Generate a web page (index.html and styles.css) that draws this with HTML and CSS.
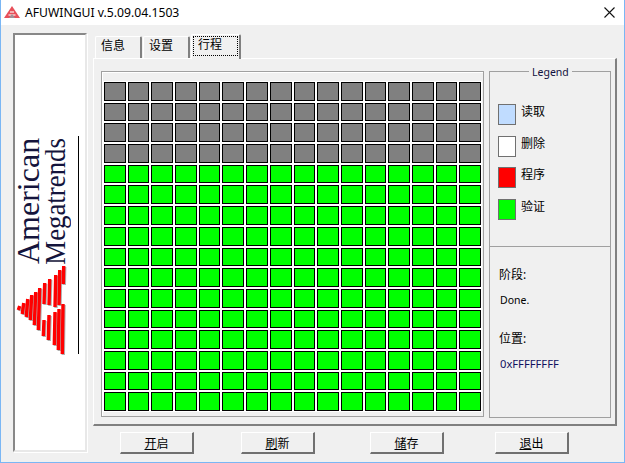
FILE: index.html
```html
<!DOCTYPE html>
<html lang="zh">
<head>
    <meta charset="UTF-8">
    <title>AFUWINGUI</title>
    <link rel="stylesheet" href="styles.css">
</head>
<body>
    <div class="window">
        <div class="titlebar">
            <svg class="app-icon" width="16" height="13" viewBox="0 0 16 13">
                <path d="M8 0 L16 12 L0 12 Z" fill="#e8505a"/>
                <path d="M4.5 9 H11.5 M6 6 H10" stroke="#f8d0d0" stroke-width="1.4"/>
                <path d="M5 12 L8 8 L11 12 Z" fill="#a09098"/>
            </svg>
            <span class="title-text">AFUWINGUI v.5.09.04.1503</span>
            <svg class="close-icon" width="11" height="11" viewBox="0 0 11 11">
                <path d="M0.5 0.5 L10.5 10.5 M10.5 0.5 L0.5 10.5" stroke="#111" stroke-width="1.1"/>
            </svg>
        </div>
        <div class="content">
            <div class="logo">
                <div class="logo-words">
                    <span class="word-one">American</span>
                    <span class="word-two">Megatrends</span>
                </div>
                <svg class="logo-mark" width="52" height="92" viewBox="0 0 52 92">
                    <defs>
                        <g id="stripes" stroke-width="3.4" fill="none">
                            <path d="M3.7 42 L2.3 46 M7.7 39 L6.3 50 M11.7 35 L10.3 53 M15.7 31 L14.3 56 M19.7 28 L18.3 61 M23.7 24 L22.3 66"/>
                            <path d="M28.7 19 L28 40 M28 56 L27.3 72 M33.7 15 L33 41 M33 51 L32.3 76 M39.7 11 L39 43 M39 48 L38.3 81 M43.7 6 L43 41 M43 45 L42.3 86 M47.7 2 L47.3 20 M47 40 L46.3 90"/>
                        </g>
                    </defs>
                    <use href="#stripes" x="1" y="1" stroke="#b0b0b0"/>
                    <use href="#stripes" stroke="#ff0000"/>
                </svg>
                <div class="logo-line"></div>
            </div>
            <div class="main">
                <div class="tabs">
                    <div class="tab">信息</div>
                    <div class="tab">设置</div>
                    <div class="tab tab-active"><span class="focus">行程</span></div>
                </div>
                <div class="tab-page">
                    <div class="blocks">
                        <div class="block used"></div><div class="block used"></div><div class="block used"></div><div class="block used"></div><div class="block used"></div><div class="block used"></div><div class="block used"></div><div class="block used"></div><div class="block used"></div><div class="block used"></div><div class="block used"></div><div class="block used"></div><div class="block used"></div><div class="block used"></div><div class="block used"></div><div class="block used"></div>
                        <div class="block used"></div><div class="block used"></div><div class="block used"></div><div class="block used"></div><div class="block used"></div><div class="block used"></div><div class="block used"></div><div class="block used"></div><div class="block used"></div><div class="block used"></div><div class="block used"></div><div class="block used"></div><div class="block used"></div><div class="block used"></div><div class="block used"></div><div class="block used"></div>
                        <div class="block used"></div><div class="block used"></div><div class="block used"></div><div class="block used"></div><div class="block used"></div><div class="block used"></div><div class="block used"></div><div class="block used"></div><div class="block used"></div><div class="block used"></div><div class="block used"></div><div class="block used"></div><div class="block used"></div><div class="block used"></div><div class="block used"></div><div class="block used"></div>
                        <div class="block used"></div><div class="block used"></div><div class="block used"></div><div class="block used"></div><div class="block used"></div><div class="block used"></div><div class="block used"></div><div class="block used"></div><div class="block used"></div><div class="block used"></div><div class="block used"></div><div class="block used"></div><div class="block used"></div><div class="block used"></div><div class="block used"></div><div class="block used"></div>
                        <div class="block"></div><div class="block"></div><div class="block"></div><div class="block"></div><div class="block"></div><div class="block"></div><div class="block"></div><div class="block"></div><div class="block"></div><div class="block"></div><div class="block"></div><div class="block"></div><div class="block"></div><div class="block"></div><div class="block"></div><div class="block"></div>
                        <div class="block"></div><div class="block"></div><div class="block"></div><div class="block"></div><div class="block"></div><div class="block"></div><div class="block"></div><div class="block"></div><div class="block"></div><div class="block"></div><div class="block"></div><div class="block"></div><div class="block"></div><div class="block"></div><div class="block"></div><div class="block"></div>
                        <div class="block"></div><div class="block"></div><div class="block"></div><div class="block"></div><div class="block"></div><div class="block"></div><div class="block"></div><div class="block"></div><div class="block"></div><div class="block"></div><div class="block"></div><div class="block"></div><div class="block"></div><div class="block"></div><div class="block"></div><div class="block"></div>
                        <div class="block"></div><div class="block"></div><div class="block"></div><div class="block"></div><div class="block"></div><div class="block"></div><div class="block"></div><div class="block"></div><div class="block"></div><div class="block"></div><div class="block"></div><div class="block"></div><div class="block"></div><div class="block"></div><div class="block"></div><div class="block"></div>
                        <div class="block"></div><div class="block"></div><div class="block"></div><div class="block"></div><div class="block"></div><div class="block"></div><div class="block"></div><div class="block"></div><div class="block"></div><div class="block"></div><div class="block"></div><div class="block"></div><div class="block"></div><div class="block"></div><div class="block"></div><div class="block"></div>
                        <div class="block"></div><div class="block"></div><div class="block"></div><div class="block"></div><div class="block"></div><div class="block"></div><div class="block"></div><div class="block"></div><div class="block"></div><div class="block"></div><div class="block"></div><div class="block"></div><div class="block"></div><div class="block"></div><div class="block"></div><div class="block"></div>
                        <div class="block"></div><div class="block"></div><div class="block"></div><div class="block"></div><div class="block"></div><div class="block"></div><div class="block"></div><div class="block"></div><div class="block"></div><div class="block"></div><div class="block"></div><div class="block"></div><div class="block"></div><div class="block"></div><div class="block"></div><div class="block"></div>
                        <div class="block"></div><div class="block"></div><div class="block"></div><div class="block"></div><div class="block"></div><div class="block"></div><div class="block"></div><div class="block"></div><div class="block"></div><div class="block"></div><div class="block"></div><div class="block"></div><div class="block"></div><div class="block"></div><div class="block"></div><div class="block"></div>
                        <div class="block"></div><div class="block"></div><div class="block"></div><div class="block"></div><div class="block"></div><div class="block"></div><div class="block"></div><div class="block"></div><div class="block"></div><div class="block"></div><div class="block"></div><div class="block"></div><div class="block"></div><div class="block"></div><div class="block"></div><div class="block"></div>
                        <div class="block"></div><div class="block"></div><div class="block"></div><div class="block"></div><div class="block"></div><div class="block"></div><div class="block"></div><div class="block"></div><div class="block"></div><div class="block"></div><div class="block"></div><div class="block"></div><div class="block"></div><div class="block"></div><div class="block"></div><div class="block"></div>
                        <div class="block"></div><div class="block"></div><div class="block"></div><div class="block"></div><div class="block"></div><div class="block"></div><div class="block"></div><div class="block"></div><div class="block"></div><div class="block"></div><div class="block"></div><div class="block"></div><div class="block"></div><div class="block"></div><div class="block"></div><div class="block"></div>
                        <div class="block"></div><div class="block"></div><div class="block"></div><div class="block"></div><div class="block"></div><div class="block"></div><div class="block"></div><div class="block"></div><div class="block"></div><div class="block"></div><div class="block"></div><div class="block"></div><div class="block"></div><div class="block"></div><div class="block"></div><div class="block"></div>
                    </div>
                    <div class="side">
                        <div class="legend">
                            <div class="legend-title">Legend</div>
                            <div class="legend-row"><span class="swatch read"></span><span class="legend-label">读取</span></div>
                            <div class="legend-row"><span class="swatch erase"></span><span class="legend-label">删除</span></div>
                            <div class="legend-row"><span class="swatch program"></span><span class="legend-label">程序</span></div>
                            <div class="legend-row"><span class="swatch verify"></span><span class="legend-label">验证</span></div>
                        </div>
                        <div class="status">
                            <div class="status-label">阶段:</div>
                            <div class="status-value">Done.</div>
                            <div class="status-label second">位置:</div>
                            <div class="status-value address">0xFFFFFFFF</div>
                        </div>
                    </div>
                </div>
                <div class="buttons">
                    <button class="btn-open"><u>开</u>启</button>
                    <button class="btn-refresh"><u>刷</u>新</button>
                    <button class="btn-save"><u>储</u>存</button>
                    <button class="btn-quit"><u>退</u>出</button>
                </div>
            </div>
        </div>
    </div>
</body>
</html>
```

FILE: styles.css
```css
* {
    box-sizing: border-box;
}
body {
    margin: 0;
    font-family: "Noto Sans", "Noto Sans CJK SC", sans-serif;
    font-size: 12px;
    color: #000;
    overflow: hidden;
}
.window {
    width: 625px;
    height: 463px;
    background-color: #f0f0f0;
    border: 1px solid #7ab6f4;
    border-top: none;
    display: flex;
    flex-direction: column;
}
.titlebar {
    height: 25px;
    background-color: #fff;
    display: flex;
    align-items: center;
    padding: 0 9px 0 3px;
}
.app-icon {
    margin-right: 5px;
}
.title-text {
    font-size: 12.2px;
    flex: 1;
}
.content {
    flex: 1;
    display: flex;
    padding: 8px 7px 0 12px;
}

/* logo panel */
.logo {
    width: 74px;
    height: 419px;
    background-color: #fff;
    border-top: 2px solid #888;
    border-left: 2px solid #888;
    border-right: 2px solid #e8e8e8;
    border-bottom: 2px solid #e8e8e8;
    box-shadow: 1px 1px 0 #fff;
    position: relative;
    padding-top: 103px;
}
.logo-words {
    display: flex;
    flex-direction: column;
    font-family: "Liberation Serif", serif;
    color: #14143c;
    writing-mode: vertical-rl;
    transform: rotate(180deg);
    height: 140px;
    width: 60px;
    text-align: right;
}
.word-one {
    font-size: 32px;
    line-height: 26px;
}
.word-two {
    font-size: 29px;
    line-height: 28px;
    transform: scaleY(0.925);
    transform-origin: center bottom;
}
.logo-mark {
    position: absolute;
    left: 1px;
    top: 229px;
}
.logo-line {
    position: absolute;
    left: 63px;
    top: 101px;
    width: 1px;
    height: 218px;
    background-color: #000;
}

/* tabs */
.main {
    margin-left: 6px;
    width: 524px;
    display: flex;
    flex-direction: column;
}
.tabs {
    display: flex;
    height: 25px;
    align-items: flex-end;
    padding-left: 2px;
}
.tab {
    width: 47px;
    height: 22px;
    background-color: #f0f0f0;
    border-top: 1px solid #fff;
    border-left: 1px solid #fff;
    border-right: 2px solid #808080;
    padding: 1px 0 0 5px;
    line-height: 16px;
    border-radius: 2px 2px 0 0;
    margin-right: 1px;
}
.tab-active {
    width: 50px;
    height: 25px;
    margin-bottom: -1px;
    padding: 1px;
    position: relative;
}
.focus {
    display: block;
    width: 45px;
    height: 20px;
    border: 1px dotted #000;
    padding-left: 4px;
    line-height: 16px;
}
.tab-page {
    height: 368px;
    border-top: 1px solid #fff;
    border-left: 1px solid #fff;
    border-right: 2px solid #808080;
    border-bottom: 2px solid #808080;
    padding: 12px 4px 6px 7px;
    display: flex;
    gap: 5px;
}

/* block grid */
.blocks {
    width: 383px;
    height: 346px;
    border: 1px solid #a0a0a0;
    box-shadow: inset 1px 1px 0 #fff;
    padding: 10px 2px 5px 2px;
    display: grid;
    grid-template-columns: repeat(16, 1fr);
    grid-template-rows: repeat(16, 1fr);
    gap: 2px;
}
.block {
    border: 1px solid #000;
    background-color: #00ff00;
    box-shadow: 0 0 0 1px #fff;
}
.block.used {
    background-color: #808080;
}

/* right side */
.side {
    width: 122px;
    height: 347px;
    border: 1px solid #a0a0a0;
    display: flex;
    flex-direction: column;
}
.legend {
    height: 175px;
    border-bottom: 1px solid #a0a0a0;
    padding: 32px 0 0 8px;
    position: relative;
}
.legend-title {
    position: absolute;
    top: -7px;
    left: 39px;
    padding: 0 3px;
    background-color: #f0f0f0;
    color: #101040;
    font-size: 10.5px;
    line-height: 14px;
}
.legend-row {
    display: flex;
    align-items: center;
    height: 21px;
    margin-bottom: 10.67px;
    gap: 5px;
}
.legend-label {
    margin-bottom: 7px;
}
.swatch {
    width: 18px;
    height: 21px;
    border: 1px solid #707070;
}
.swatch.read {
    background-color: #c0dcff;
}
.swatch.erase {
    background-color: #fff;
}
.swatch.program {
    background-color: #ff0000;
}
.swatch.verify {
    background-color: #00ff00;
}
.status {
    padding: 20px 0 0 9px;
}
.status-label {
    line-height: 16px;
}
.status-label.second {
    margin-top: 23px;
}
.status-value {
    margin-top: 9px;
    font-size: 10.5px;
    line-height: 16px;
    padding-left: 1px;
}
.address {
    font-size: 11.2px;
    color: #101060;
}

/* bottom buttons */
.buttons {
    display: flex;
    padding: 6px 0 0 27px;
}
.buttons button {
    width: 74px;
    height: 22px;
    background-color: #f0f0f0;
    border: none;
    border-top: 1px solid #fff;
    border-left: 1px solid #fff;
    border-right: 2px solid #707070;
    border-bottom: 2px solid #707070;
    font-family: "Noto Sans CJK SC", sans-serif;
    font-size: 12px;
    padding: 0;
}
.btn-refresh {
    margin-left: 47px;
}
.btn-save {
    margin-left: 55px;
}
.btn-quit {
    margin-left: 51px;
}
```
